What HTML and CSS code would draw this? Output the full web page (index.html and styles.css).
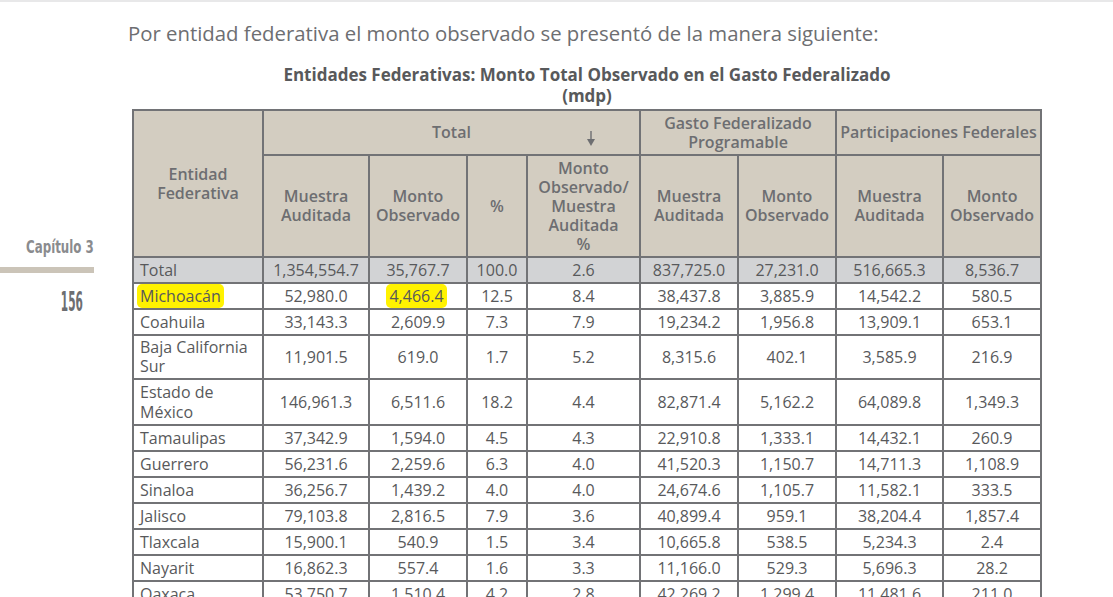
FILE: index.html
```html
<!DOCTYPE html>
<html lang="es">
<head>
<meta charset="utf-8">
<title>Monto Total Observado en el Gasto Federalizado</title>
<link rel="stylesheet" href="styles.css">
</head>
<body>
<div class="page">
  <aside class="side">
    <div class="chapter">Capítulo 3</div>
    <div class="bar"></div>
    <div class="pagenum">156</div>
  </aside>
  <main class="main">
    <p class="intro">Por entidad federativa el monto observado se presentó de la manera siguiente:</p>
    <h2 class="title">Entidades Federativas: Monto Total Observado en el Gasto Federalizado<br>(mdp)</h2>
    <table class="data">
      <colgroup>
        <col class="c1"><col class="c2"><col class="c3"><col class="c4"><col class="c5">
        <col class="c6"><col class="c7"><col class="c8"><col class="c9">
      </colgroup>
      <thead>
        <tr class="h1">
          <th rowspan="2">Entidad<br>Federativa</th>
          <th colspan="4" class="total-head">Total
            <svg class="arrow" width="10" height="16" viewBox="0 0 10 16"><line x1="5" y1="0" x2="5" y2="9" stroke="#6d6e71" stroke-width="1.4"/><polygon points="1,8 9,8 5,15" fill="#6d6e71"/></svg>
          </th>
          <th colspan="2">Gasto Federalizado<br>Programable</th>
          <th colspan="2">Participaciones Federales</th>
        </tr>
        <tr class="h2">
          <th>Muestra<br>Auditada</th>
          <th>Monto<br>Observado</th>
          <th>%</th>
          <th>Monto<br>Observado/<br>Muestra<br>Auditada<br>%</th>
          <th>Muestra<br>Auditada</th>
          <th>Monto<br>Observado</th>
          <th>Muestra<br>Auditada</th>
          <th>Monto<br>Observado</th>
        </tr>
      </thead>
      <tbody>
        <tr class="total"><td>Total</td><td>1,354,554.7</td><td>35,767.7</td><td>100.0</td><td>2.6</td><td>837,725.0</td><td>27,231.0</td><td>516,665.3</td><td>8,536.7</td></tr>
        <tr><td><span class="hl">Michoacán</span></td><td>52,980.0</td><td><span class="hl">4,466.4</span></td><td>12.5</td><td>8.4</td><td>38,437.8</td><td>3,885.9</td><td>14,542.2</td><td>580.5</td></tr>
        <tr><td>Coahuila</td><td>33,143.3</td><td>2,609.9</td><td>7.3</td><td>7.9</td><td>19,234.2</td><td>1,956.8</td><td>13,909.1</td><td>653.1</td></tr>
        <tr class="tight"><td>Baja California<br>Sur</td><td>11,901.5</td><td>619.0</td><td>1.7</td><td>5.2</td><td>8,315.6</td><td>402.1</td><td>3,585.9</td><td>216.9</td></tr>
        <tr><td>Estado de<br>México</td><td>146,961.3</td><td>6,511.6</td><td>18.2</td><td>4.4</td><td>82,871.4</td><td>5,162.2</td><td>64,089.8</td><td>1,349.3</td></tr>
        <tr><td>Tamaulipas</td><td>37,342.9</td><td>1,594.0</td><td>4.5</td><td>4.3</td><td>22,910.8</td><td>1,333.1</td><td>14,432.1</td><td>260.9</td></tr>
        <tr><td>Guerrero</td><td>56,231.6</td><td>2,259.6</td><td>6.3</td><td>4.0</td><td>41,520.3</td><td>1,150.7</td><td>14,711.3</td><td>1,108.9</td></tr>
        <tr><td>Sinaloa</td><td>36,256.7</td><td>1,439.2</td><td>4.0</td><td>4.0</td><td>24,674.6</td><td>1,105.7</td><td>11,582.1</td><td>333.5</td></tr>
        <tr><td>Jalisco</td><td>79,103.8</td><td>2,816.5</td><td>7.9</td><td>3.6</td><td>40,899.4</td><td>959.1</td><td>38,204.4</td><td>1,857.4</td></tr>
        <tr><td>Tlaxcala</td><td>15,900.1</td><td>540.9</td><td>1.5</td><td>3.4</td><td>10,665.8</td><td>538.5</td><td>5,234.3</td><td>2.4</td></tr>
        <tr><td>Nayarit</td><td>16,862.3</td><td>557.4</td><td>1.6</td><td>3.3</td><td>11,166.0</td><td>529.3</td><td>5,696.3</td><td>28.2</td></tr>
        <tr><td>Oaxaca</td><td>53,750.7</td><td>1,510.4</td><td>4.2</td><td>2.8</td><td>42,269.2</td><td>1,299.4</td><td>11,481.6</td><td>211.0</td></tr>
      </tbody>
    </table>
  </main>
</div>
</body>
</html>
```

FILE: styles.css
```css
html, body {
  margin: 0;
  padding: 0;
  background: #ffffff;
}
body {
  border-top: 2px solid #e8e8e9;
  font-family: "Open Sans", "Noto Sans", sans-serif;
  color: #58595b;
  overflow: hidden;
  height: 595px;
}
.page {
  display: flex;
  align-items: flex-start;
}
.side {
  width: 94px;
  flex: none;
  padding-top: 234px;
  display: flex;
  flex-direction: column;
  align-items: flex-end;
}
.chapter {
  font-family: "DejaVu Sans Condensed", "DejaVu Sans", sans-serif;
  font-weight: 700;
  font-size: 18px;
  line-height: 22px;
  color: #8a8b8e;
  white-space: nowrap;
  transform: scaleX(0.73);
  transform-origin: right center;
}
.bar {
  width: 94px;
  height: 6px;
  margin-top: 9px;
  background: #cbc4b8;
}
.pagenum {
  margin-top: 15px;
  margin-right: 11px;
  font-family: "DejaVu Sans Condensed", "DejaVu Sans", sans-serif;
  font-weight: 700;
  font-size: 26px;
  line-height: 28px;
  color: #6d6e71;
  transform: scaleX(0.45);
  transform-origin: right center;
}
.main {
  margin-left: 34px;
  flex: none;
}
.intro {
  margin: 17px 0 0 0;
  font-size: 20.35px;
  line-height: 28px;
  color: #6d6e71;
  font-stretch: 90%;
  white-space: nowrap;
}
.title {
  margin: 17px 0 0 0;
  width: 918px;
  text-align: center;
  font-size: 17px;
  line-height: 21px;
  font-weight: 700;
  color: #58595b;
  font-stretch: 90%;
}
.data {
  margin: 3px 0 0 4px;
  border-collapse: collapse;
  table-layout: fixed;
  width: 910px;
  font-size: 16px;
  font-stretch: 88%;
}
.c1 { width: 130px; }
.c2 { width: 106px; }
.c3 { width: 98px; }
.c4 { width: 60px; }
.c5 { width: 113px; }
.c6 { width: 98px; }
.c7 { width: 98px; }
.c8 { width: 107px; }
.c9 { width: 98px; }
.data th, .data td {
  border: 2px solid #727376;
}
.data th {
  background: #d3cdc1;
  color: #6d6e71;
  font-weight: 600;
  line-height: 19px;
  padding: 0 2px;
  text-align: center;
  vertical-align: middle;
}
.h1 { height: 45px; }
.h2 { height: 102px; }
.total-head {
  position: relative;
}
.arrow {
  position: absolute;
  left: 322px;
  top: 20px;
}
.data td {
  padding: 2px 6px;
  line-height: 20px;
  text-align: center;
  white-space: nowrap;
}
.data .tight td {
  line-height: 19px;
}
.data td:first-child {
  text-align: left;
}
.total td {
  background: #d2d3d5;
}
.hl {
  background: #fff200;
  border-radius: 5px;
  padding: 1px 3px;
  margin-left: -3px;
}
```
